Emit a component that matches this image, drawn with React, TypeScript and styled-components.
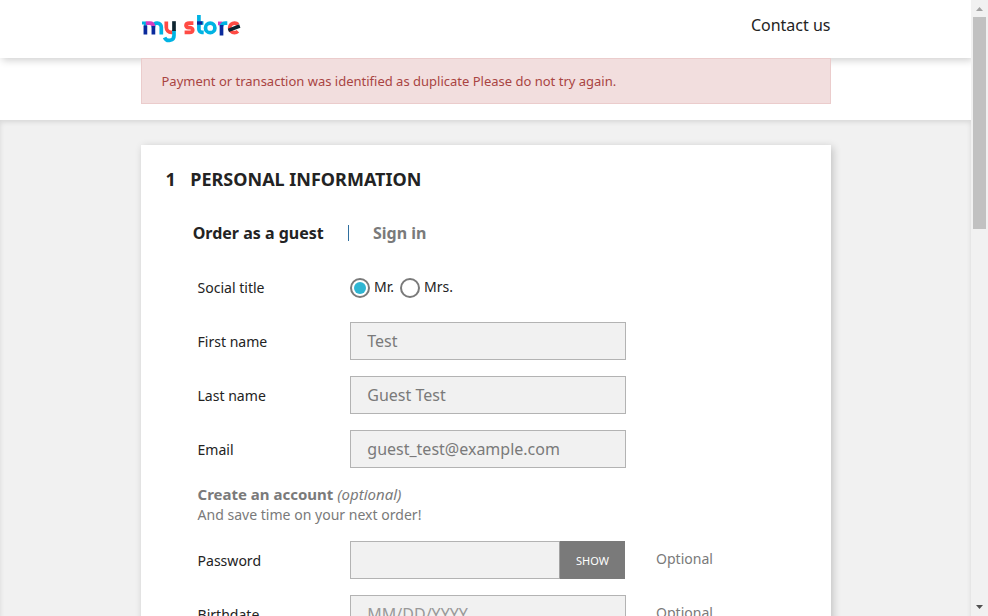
import React from "react";
import styled, { createGlobalStyle } from "styled-components";

const GlobalStyle = createGlobalStyle`
  *, *::before, *::after { box-sizing: border-box; }
  html, body { margin: 0; padding: 0; }
  body {
    background: #fff;
    color: #232323;
    font: 400 14.06px/20px "Noto Sans", sans-serif;
    overflow: hidden;
  }
`;

const Window = styled.div`
  display: flex;
  height: 616px;
  overflow: hidden;
`;

const Page = styled.div`
  display: flex;
  flex-direction: column;
  width: 971px;
  height: 616px;
  overflow: hidden;
`;

const Container = styled.div`
  width: 690px;
  margin: 0 auto 0 141px;
`;

const Header = styled.header`
  position: relative;
  z-index: 1;
  flex: none;
  height: 58px;
  background: #fff;
  box-shadow: 2px 2px 8px 0 rgba(0, 0, 0, 0.2);
`;

const HeaderRow = styled(Container)`
  display: flex;
  justify-content: space-between;
  padding: 14px 0.5px 0 0;
`;

const ContactLink = styled.a`
  font-size: 16px;
  line-height: 22px;
  color: #232323;
  text-decoration: none;
`;

const Notifications = styled.div`
  position: relative;
  z-index: 2;
  flex: none;
  height: 62px;
`;

const Alert = styled.div`
  height: 46px;
  padding: 12px 19.5px;
  border: 1px solid #ebcccc;
  background: #f2dede;
  color: #a94442;
  font-size: 13px;
  line-height: 21px;
`;

const Wrapper = styled.main`
  flex: 1;
  padding-top: 25px;
  background: #f1f1f1;
  box-shadow: inset 0 2px 5px 0 rgba(0, 0, 0, 0.11);
`;

const Card = styled.section`
  width: 690px;
  height: 600px;
  margin-left: 141px;
  padding: 22px 24.5px;
  background: #fff;
  box-shadow: 2px 2px 8px 0 rgba(0, 0, 0, 0.2);
`;

const StepTitle = styled.h1`
  display: flex;
  gap: 14.5px;
  margin: 0;
  font-size: 18px;
  line-height: 25px;
  font-weight: 700;
  text-transform: uppercase;
`;

const Tabs = styled.nav`
  display: flex;
  margin: 29px 0 0 27.2px;
  font-size: 16px;
  line-height: 24px;
  font-weight: 700;
`;

const Tab = styled.a<{ $active?: boolean }>`
  color: ${(p) => (p.$active ? "#232323" : "#7a7a7a")};
`;

const Separator = styled.span`
  width: 1px;
  height: 16px;
  margin: 4px 24.3px 0 24px;
  background: #2f6f9f;
`;

const Form = styled.form`
  margin: 23px 0 0 32px;
`;

const Row = styled.div`
  display: grid;
  grid-template-columns: 152.5px 276px 1fr;
  height: 38px;
  margin-bottom: 16px;
`;

const Label = styled.label`
  padding-top: 10px;
`;

const Note = styled.span`
  padding: 8px 0 0 30px;
  color: #7a7a7a;
`;

const Field = styled.input`
  min-width: 0;
  width: 100%;
  height: 38px;
  padding: 0 16px 0 16.3px;
  border: 1px solid #b3b3b3;
  border-radius: 0;
  outline: 0;
  background: #f1f1f1;
  color: #7a7a7a;
  font: 400 16px/20px "Noto Sans", sans-serif;
  &::placeholder { color: #999; opacity: 1; }
`;

const InputGroup = styled.div`
  display: flex;
  width: 275px;
`;

const PasswordField = styled(Field)`
  flex: 1;
  border-right-color: #a2a2a2;
`;

const ShowButton = styled.button`
  flex: none;
  width: 65px;
  height: 38px;
  padding: 2px 0 0;
  border: 0;
  background: #7a7a7a;
  color: #fff;
  font: 400 11px/16px "Noto Sans", sans-serif;
  text-transform: uppercase;
`;

const Choices = styled.div`
  display: flex;
  gap: 6px;
  padding-top: 9px;
`;

const Choice = styled.label`
  display: flex;
  gap: 4px;
  height: 20px;
`;

const Radio = styled.span<{ $checked?: boolean }>`
  display: flex;
  align-items: center;
  justify-content: center;
  width: 20px;
  height: 20px;
  margin-top: 1px;
  border: 2px solid #7a7a7a;
  border-radius: 50%;
  &::after {
    content: "";
    width: 12px;
    height: 12px;
    border-radius: 50%;
    background: ${(p) => (p.$checked ? "#2fb5d2" : "transparent")};
  }
`;

const AccountHint = styled.p`
  margin: 0 0 16px;
  color: #7a7a7a;
`;

const HintHeading = styled.span`
  font-size: 15px;
`;

const Scrollbar = styled.aside`
  display: flex;
  flex-direction: column;
  align-items: center;
  width: 17px;
  height: 616px;
  background: #f1f1f1;
`;

const ScrollArrow = styled.svg`
  display: block;
  flex: none;
  width: 17px;
  height: 17px;
`;

const Thumb = styled.div`
  width: 13px;
  height: 212px;
  margin-bottom: auto;
  background: #c1c1c1;
`;

const Logo = () => (
  <svg width="100" height="30" viewBox="0 0 100 30" fill="none" strokeWidth="3.7" aria-label="my store">
    <path d="M12.4 13.5V12.4a3.4 3.4 0 0 1 3.4-3.2h.6a3.9 3.9 0 0 1 3.9 4V20.5" stroke="#00b3e3" />
    <path d="M1 9H5M4.4 8v4.5" stroke="#00b3e3" strokeWidth="3" />
    <path d="M4.8 9.1h4.2c2 0 3.2 1.4 3.4 3.3" stroke="#d63cc0" />
    <path d="M4.4 11.5V20.5M12.4 12V20.5" stroke="#0a2a9c" />
    <path d="M25.3 7.5V13.3a5 5 0 0 0 5 5h3" stroke="#ff4b44" />
    <path d="M33 16v5.4a4.9 4.9 0 0 1-9.4 2" stroke="#00b3e3" />
    <path d="M33 7.2V17" stroke="#0d2430" />
    <path d="M52.4 9.2H48.2c-4.2 0-4.2 4.3-.6 4.5h1.4c3.9.3 3.6 4.7-.4 4.7H43.6" stroke="#ff4b44" />
    <path d="M57.9 1V15.3a3 3 0 0 0 3 3h1.8M58 9h4.5" stroke="#00b3e3" />
    <path d="M56 9h5.4" stroke="#0a2a9c" strokeWidth="3.4" />
    <circle cx="69.2" cy="13.9" r="4.7" stroke="#00b3e3" />
    <path d="M77 9.4h4.5" stroke="#d63cc0" />
    <path d="M80.5 12.4c0-2 1.7-3.3 4-3.3H86.3" stroke="#00b3e3" />
    <path d="M80.5 11V21.5" stroke="#0a2a9c" />
    <path d="M96.9 17.2a4.8 4.8 0 1 1 .1-6.6" stroke="#ff4b44" />
    <path d="M87.4 16.3L98.8 12" stroke="#0d2430" strokeWidth="3.5" />
  </svg>
);

type FieldRowProps = { label: string; value?: string; placeholder?: string; note?: string };

const FieldRow = ({ label, value, placeholder, note }: FieldRowProps) => (
  <Row>
    <Label>{label}</Label>
    <Field defaultValue={value} placeholder={placeholder} />
    {note && <Note>{note}</Note>}
  </Row>
);

export default function App() {
  return (
    <>
      <GlobalStyle />
      <Window>
        <Page>
          <Header>
            <HeaderRow>
              <Logo />
              <ContactLink>Contact us</ContactLink>
            </HeaderRow>
          </Header>
          <Notifications>
            <Container>
              <Alert>Payment or transaction was identified as duplicate Please do not try again.</Alert>
            </Container>
          </Notifications>
          <Wrapper>
            <Card>
              <StepTitle>
                <span>1</span>
                <span>Personal Information</span>
              </StepTitle>
              <Tabs>
                <Tab $active>Order as a guest</Tab>
                <Separator />
                <Tab>Sign in</Tab>
              </Tabs>
              <Form>
                <Row>
                  <Label>Social title</Label>
                  <Choices>
                    <Choice><Radio $checked />Mr.</Choice>
                    <Choice><Radio />Mrs.</Choice>
                  </Choices>
                </Row>
                <FieldRow label="First name" value="Test" />
                <FieldRow label="Last name" value="Guest Test" />
                <FieldRow label="Email" value="guest_test@example.com" />
                <AccountHint>
                  <HintHeading><b>Create an account</b> <i>(optional)</i></HintHeading>
                  <br />
                  And save time on your next order!
                </AccountHint>
                <Row>
                  <Label>Password</Label>
                  <InputGroup>
                    <PasswordField type="password" />
                    <ShowButton type="button">Show</ShowButton>
                  </InputGroup>
                  <Note>Optional</Note>
                </Row>
                <FieldRow label="Birthdate" placeholder="MM/DD/YYYY" note="Optional" />
              </Form>
            </Card>
          </Wrapper>
        </Page>
        <Scrollbar>
          <ScrollArrow viewBox="0 0 17 17"><path d="M5 11L8.5 7L12 11Z" fill="#a3a3a3" /></ScrollArrow>
          <Thumb />
          <ScrollArrow viewBox="0 0 17 17"><path d="M5 6L8.5 10L12 6Z" fill="#505050" /></ScrollArrow>
        </Scrollbar>
      </Window>
    </>
  );
}
